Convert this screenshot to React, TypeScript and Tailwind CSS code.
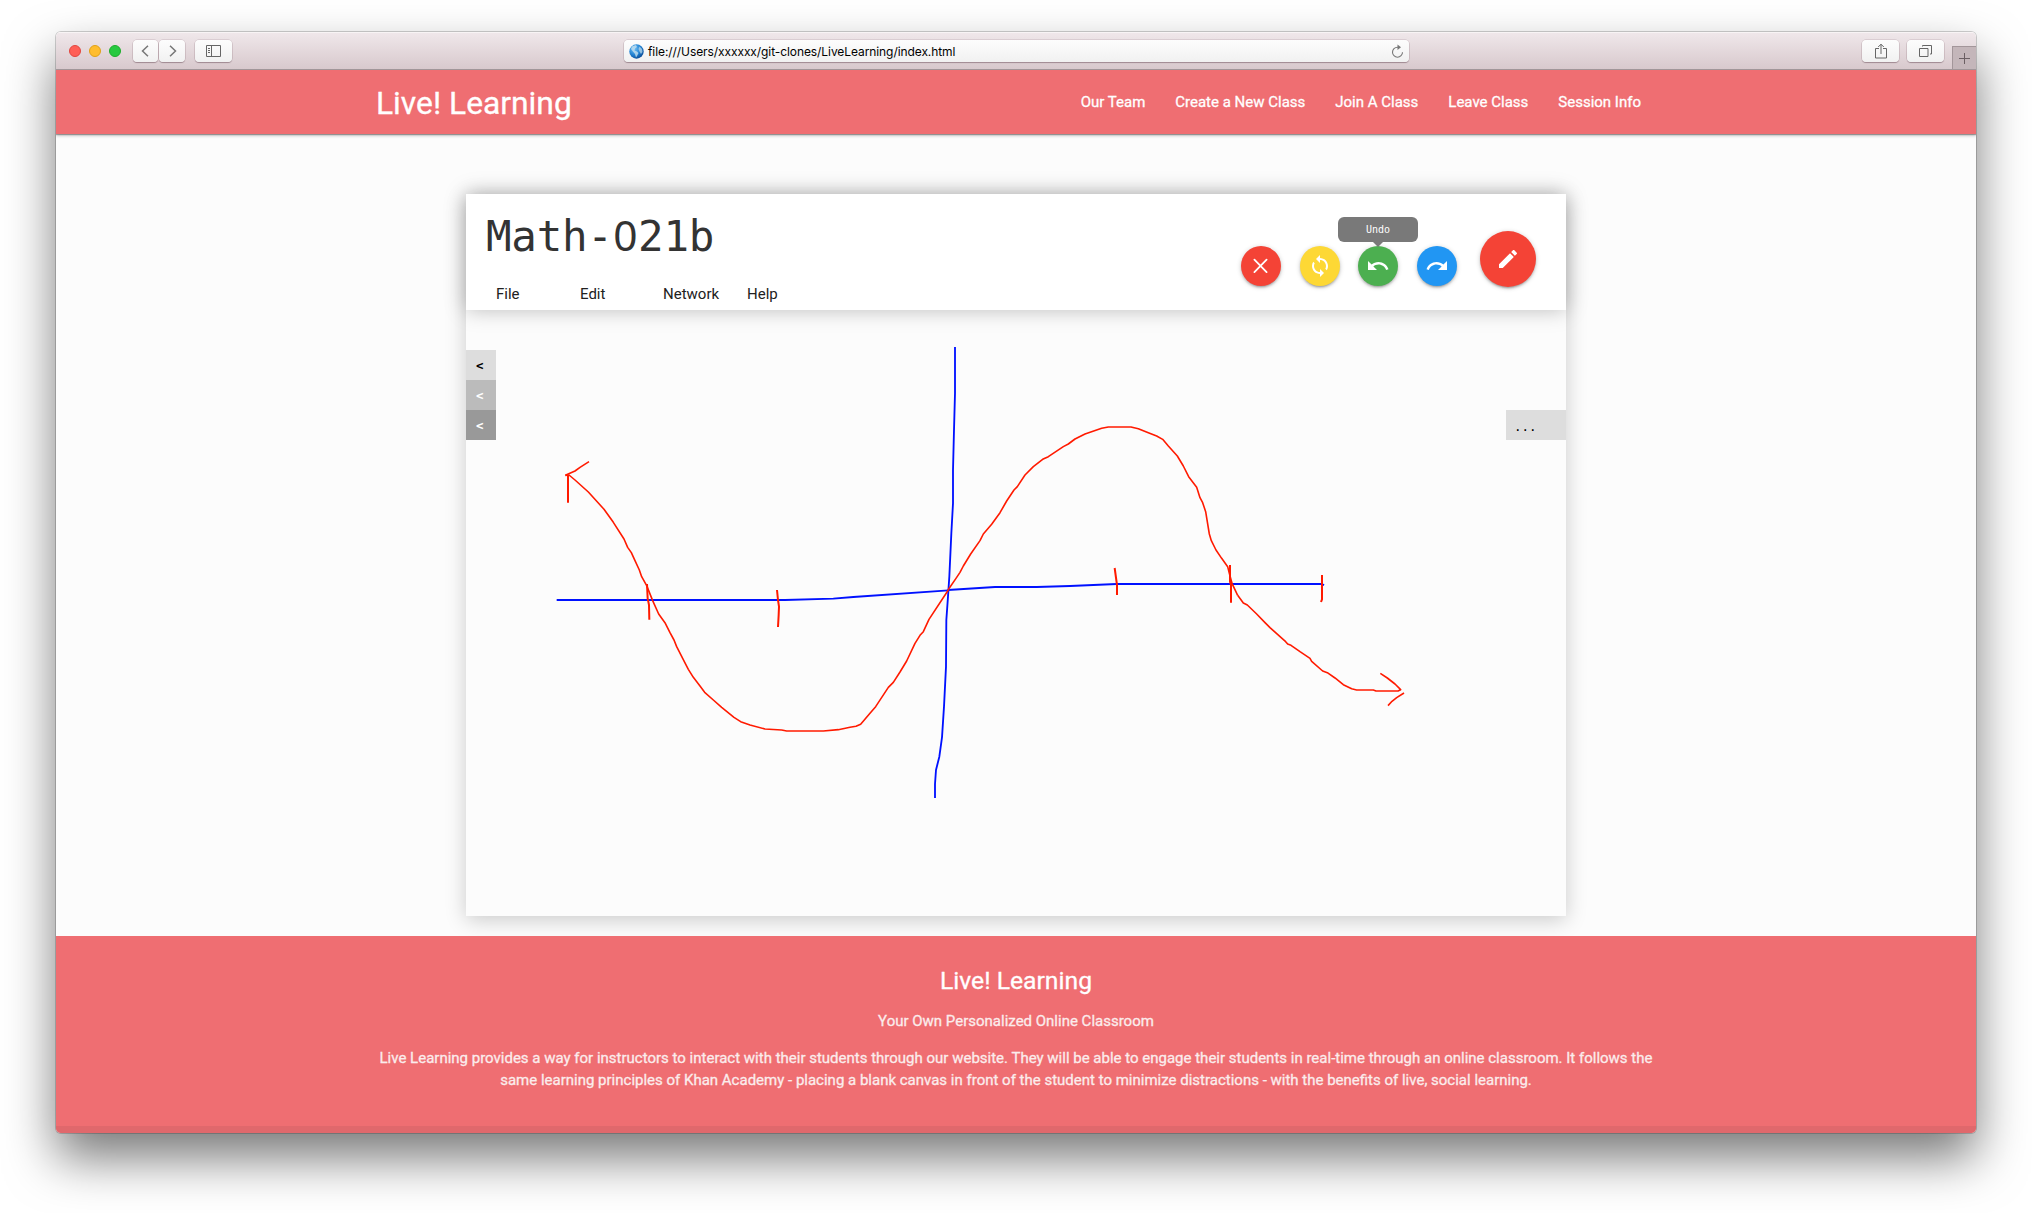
const MATERIAL = {
  sync: "M12 4V1L8 5l4 4V6c3.31 0 6 2.69 6 6 0 1.01-.25 1.97-.7 2.8l1.46 1.46C19.54 15.03 20 13.57 20 12c0-4.42-3.58-8-8-8zm0 14c-3.31 0-6-2.69-6-6 0-1.01.25-1.97.7-2.8L5.24 7.74C4.46 8.97 4 10.43 4 12c0 4.42 3.58 8 8 8v3l4-4-4-4v3z",
  undo: "M12.5 8c-2.65 0-5.05.99-6.9 2.6L2 7v9h9l-3.62-3.62c1.39-1.16 3.16-1.88 5.12-1.88 3.54 0 6.55 2.31 7.6 5.5l2.37-.78C21.08 11.03 17.15 8 12.5 8z",
  redo: "M18.4 10.6C16.55 8.99 14.15 8 11.5 8c-4.65 0-8.58 3.03-9.96 7.22L3.9 16c1.05-3.19 4.05-5.5 7.6-5.5 1.95 0 3.73.72 5.12 1.88L13 16h9V7l-3.6 3.6z",
  edit: "M3 17.25V21h3.75L17.81 9.94l-3.75-3.75L3 17.25zM20.71 7.04c.39-.39.39-1.02 0-1.41l-2.34-2.34c-.39-.39-1.02-.39-1.41 0l-1.83 1.83 3.75 3.75 1.83-1.83z",
};

const fab = "flex items-center justify-center rounded-full shadow-[0_2px_2px_0_rgba(0,0,0,0.14),0_3px_1px_-2px_rgba(0,0,0,0.12),0_1px_5px_0_rgba(0,0,0,0.2)]";
const chromeButton = "flex h-[22px] items-center justify-center rounded-[4px] bg-linear-to-b from-[#fdfdfd] to-[#f1f1f1] shadow-[0_0_0_0.5px_rgba(120,90,100,0.3),0_1px_1px_rgba(90,60,70,0.4)]";

function Glyph({ d }: { d: string }) {
  return (
    <svg className="size-6 fill-white" viewBox="0 0 24 24">
      <path d={d} />
    </svg>
  );
}

function TitleBar() {
  return (
    <div className="flex h-[38px] shrink-0 items-start border-b border-[#a3989b] bg-linear-to-b from-[#f0e8eb] to-[#d8c9cd] shadow-[inset_0_1px_0_#f8f4f5]">
      <div className="ml-[13px] mt-[13px] flex w-[64px] gap-2">
        <span className="size-3 rounded-full border border-[#e2463f] bg-[#ff5f57]" />
        <span className="size-3 rounded-full border border-[#e1a116] bg-[#ffbd2e]" />
        <span className="size-3 rounded-full border border-[#1dad2b] bg-[#28c940]" />
      </div>
      <div className="mt-2 flex gap-px">
        <div className={`${chromeButton} w-[25px]`}>
          <svg className="mr-px h-3 w-2 fill-none stroke-[#777] stroke-[1.5]" viewBox="0 0 8 12"><path d="M7 .7 1.5 6 7 11.3" /></svg>
        </div>
        <div className={`${chromeButton} w-[26px]`}>
          <svg className="ml-px h-3 w-2 fill-none stroke-[#777] stroke-[1.5]" viewBox="0 0 8 12"><path d="M1 .7 6.500 6 1 11.3" /></svg>
        </div>
      </div>
      <div className={`${chromeButton} ml-[10px] mt-2 w-[37px]`}>
        <svg className="h-3 w-[15px] fill-none stroke-[#666]" viewBox="0 0 15 12"><path d="M.5.5h14v11H.5zM5.500.5v11M2 3.500h2M2 5.500h2M2 7.500h2" /></svg>
      </div>
      <div className={`${chromeButton} ml-[392px] mt-2 w-[785px] justify-start`}>
        <svg className="ml-[5px] size-[15px]" viewBox="0 0 15 15">
          <defs>
            <radialGradient id="globe" cx="35%" cy="30%" r="75%">
              <stop offset="0" stopColor="#6fc0f7" />
              <stop offset="0.6" stopColor="#1f7fd0" />
              <stop offset="1" stopColor="#0b4a94" />
            </radialGradient>
          </defs>
          <circle cx="7.500" cy="7.500" r="7.200" fill="url(#globe)" />
          <path d="M3 2.500 7 1l1 2-2 1.500-.5 2L8 7.500l1.500 1.500L8 12l-1 1.500L6 10 3.500 7 2 5z" fill="#c6e0ee" opacity=".8" />
          <path d="M10.500 2.500 13 5l.5 3-1.500 2-1.500-2.500L9.500 5z" fill="#b8d8ea" opacity=".75" />
        </svg>
        <span className="ml-[4px] pt-px whitespace-nowrap font-['Inter'] text-[12px] leading-[22px] tracking-[-0.08px] text-black">file:///Users/xxxxxx/git-clones/LiveLearning/index.html</span>
        <svg className="ml-auto mr-[5px] h-[15px] w-[13px]" viewBox="0 0 13 15">
          <path d="M7.500 3.200H6.500A5 5 0 1 0 11.500 8.200" fill="none" stroke="#777" strokeWidth="1.100" />
          <path d="M6.500.5 10 3.200 6.500 5.900z" fill="#777" />
        </svg>
      </div>
      <div className={`${chromeButton} ml-[453px] mt-2 w-[37px]`}>
        <svg className="h-4 w-3 fill-none stroke-[#666]" viewBox="0 0 12 16"><path d="M4 5.500H.5v9.500h11V5.500H8M6 11V1.200M3.200 4 6 1.200 8.800 4" /></svg>
      </div>
      <div className={`${chromeButton} ml-2 mt-2 w-[37px]`}>
        <svg className="h-3 w-[13px] fill-none stroke-[#666]" viewBox="0 0 13 12"><path d="M.5 3.500h8.500v8H.5zM3.500 1.500V.5h9v8.500H11" /></svg>
      </div>
      <div className="ml-auto mt-[14px] flex h-[23px] w-6 items-center justify-center border-l border-t border-[#a3969a] bg-[#c4b6ba]">
        <svg className="size-[11px] stroke-[#6b5f63]" viewBox="0 0 11 11"><path d="M5.500 0v11M0 5.500h11" /></svg>
      </div>
    </div>
  );
}

const NAV = ["Our Team", "Create a New Class", "Join A Class", "Leave Class", "Session Info"];

function SiteHeader() {
  return (
    <header className="relative z-10 flex h-16 shrink-0 justify-center bg-[#ef6e72] text-white shadow-[0_1px_1px_0_rgba(0,0,0,0.3),0_2px_3px_0_rgba(0,0,0,0.2)] [-webkit-text-stroke:0.3px]">
      <div className="flex w-[1280px] items-center justify-between">
        <span className="pt-px text-[31.8px] leading-[64px]">Live! Learning</span>
        <nav className="flex text-[15px]">
          {NAV.map((label) => (
            <a key={label} className="px-[15px] leading-[64px]">{label}</a>
          ))}
        </nav>
      </div>
    </header>
  );
}

function Toolbar() {
  return (
    <div className="ml-auto mr-[30px] flex">
      <div className="mt-[52px] flex gap-[19px]">
        <button className={`${fab} size-10 bg-[#f44336]`}>
          <svg className="size-6 fill-none stroke-white stroke-[1.8]" viewBox="0 0 24 24" strokeLinecap="round"><path d="M5.400 5.700 17.600 18.100M17.600 5.700 5.400 18.100" /></svg>
        </button>
        <button className={`${fab} size-10 bg-[#fdd835]`}><Glyph d={MATERIAL.sync} /></button>
        <div className="relative -ml-px">
          <button className={`${fab} size-10 bg-[#4caf50]`}><Glyph d={MATERIAL.undo} /></button>
          <div className="absolute -top-[29px] -left-5 flex h-[25px] w-20 items-center justify-center rounded-[6px] bg-[#797979] font-['DejaVu_Sans_Mono'] text-[10px] text-white">
            Undo
            <span className="absolute left-[35px] top-[25px] border-x-[5px] border-t-[5px] border-x-transparent border-t-[#797979]" />
          </div>
        </div>
        <button className={`${fab} size-10 bg-[#2196f3]`}><Glyph d={MATERIAL.redo} /></button>
      </div>
      <button className={`${fab} ml-[23px] mt-[37px] size-14 bg-[#f44336]`}><Glyph d={MATERIAL.edit} /></button>
    </div>
  );
}

/* Freehand strokes, each group in its own local space at three units per pixel. */
function Drawing() {
  return (
    <svg className="absolute inset-0 h-[606px] w-[1100px] fill-none" viewBox="466 310 1100 606" strokeLinejoin="round">
      <g transform="translate(530 440) scale(0.33333)">
        <path stroke="#0011ff" strokeWidth="5.500" d="M80 480H765L910 476 970 471 1255 451" />
      </g>
      <g transform="translate(900 330) scale(0.33333)" stroke="#0011ff" strokeWidth="5.500">
        <path d="M144 780 285 771H410L510 768 650 762H1266L1272 766" />
        <path d="M165 51V190L162 300 159 420V520L154 610 148 740 144 800 139 870 138 1010 132 1130 126 1222 118 1280 108 1320 105 1362V1404" />
      </g>
      <g transform="translate(530 440) scale(0.33333)" stroke="#ff1a00">
        <path strokeWidth="4.800" d="M106 106 117 105 135 120 175 156 222 208 250 247 282 297 293 322 304 338 315 362 328 390 335 410 350 437 368 482 386 522 406 550 420 578 432 600 440 620 458 655 475 688 490 712 510 738 524 757 550 780 575 802 612 832 632 845 660 855 705 867 755 870 770 873 880 873 925 869 960 862 978 859 992 853 1020 820 1037 800 1075 742 1090 727 1110 696 1130 663 1155 610 1170 586 1180 575 1197 538 1255 450" />
        <path strokeWidth="4.800" d="M106 106 135 93 150 82 177 65" />
        <path strokeWidth="6" d="M114 105V188M351 432 353 475 357 495 358 539M741 450 744 480 747 500 746 525 744 561" />
      </g>
      <g transform="translate(900 330) scale(0.33333)" stroke="#ff1a00">
        <path strokeWidth="4.800" d="M144 780 168 745 180 727 190 708 212 672 240 632 250 612 275 583 300 548 320 513 342 480 352 470 375 435 400 410 428 388 445 380 490 350 505 342 525 327 555 312 605 295 625 291 693 291 715 296 745 308 770 318 788 328 805 348 832 378 850 408 866 440 890 472 900 503 908 518 917 545 928 612 934 632 948 660 965 685 983 710 988 730 996 760 1013 796" />
        <path strokeWidth="6" d="M644 714 651 765V795" />
      </g>
      <g transform="translate(1200 400) scale(0.33333)" stroke="#ff1a00">
        <path strokeWidth="4.800" d="M113 586 130 609 142 615 170 642 195 668 210 683 257 725 263 732 273 736 300 755 330 775 335 784 368 813 382 818 405 834 430 854 455 866 470 870 520 870 528 873 594 873 602 869 585 852 562 834 541 820M612 879 590 893 576 904 564 917" />
        <path strokeWidth="6" d="M90 495V545L93 555V608M366 525V598L363 606" />
      </g>
    </svg>
  );
}

function Board() {
  return (
    <section className="relative mx-auto mt-[60px] h-[722px] w-[1100px] bg-[#fcfcfc] shadow-[0_4px_20px_0_rgba(0,0,0,0.2)]">
      <div className="relative flex h-[116px] bg-white shadow-[0_0_20px_0_rgba(0,0,0,0.26)]">
        <div className="flex flex-col">
          <h1 className="ml-[20px] mt-[15px] h-14 font-['DejaVu_Sans_Mono'] text-[42.5px] leading-[56px] tracking-[-0.25px] text-[#333]">
            Math-<span className="inline-block w-[25.4px] text-center font-['Noto_Sans'] leading-[40px]">0</span>21b
          </h1>
          <div className="mt-[17px] ml-[30px] grid grid-cols-[84px_83px_84px_60px] text-[15px] leading-[24px] text-[#212121]">
            <span>File</span>
            <span>Edit</span>
            <span>Network</span>
            <span>Help</span>
          </div>
        </div>
        <Toolbar />
      </div>
      <div className="relative h-[606px]">
        <Drawing />
        <div className="relative flex items-end justify-between pt-10 font-['DejaVu_Sans_Mono'] text-[12.5px]">
          <div className="w-[30px] font-bold leading-[30px]">
            <div className="h-[30px] bg-[#ddd] pl-[10px] pt-px text-black">&lt;</div>
            <div className="h-[30px] bg-[#bbb] pl-[10px] pt-px text-white">&lt;</div>
            <div className="h-[30px] bg-[#999] pl-[10px] pt-px text-white">&lt;</div>
          </div>
          <div className="h-[30px] w-[60px] bg-[#ddd] pl-2 pt-0.5 leading-[30px] text-black">...</div>
        </div>
      </div>
    </section>
  );
}

function SiteFooter() {
  return (
    <footer className="relative z-10 mt-5 flex flex-1 flex-col items-center bg-[#ef6e72] text-center text-[15px] leading-[22.5px] text-[#fbecec] [-webkit-text-stroke:0.3px]">
      <h5 className="mt-[31px] text-[24.7px] leading-[28px] text-white">Live! Learning</h5>
      <p className="mt-[15px]">Your Own Personalized Online Classroom</p>
      <p className="mt-[14px] whitespace-nowrap">
        Live Learning provides a way for instructors to interact with their students through our website. They will be able to engage their students in real-time through an online classroom. It follows the
        <br />
        same learning principles of Khan Academy - placing a blank canvas in front of the student to minimize distractions - with the benefits of live, social learning.
      </p>
      <div className="mt-auto h-[7px] w-full bg-[#e0686c]" />
    </footer>
  );
}

export default function App() {
  return (
    <main className="h-[1213px] w-[2032px] overflow-hidden bg-white pt-8 font-['Roboto'] antialiased">
      <div className="mx-auto h-[1101px] w-[1920px] rounded-[5px] shadow-[0_0_0_1px_rgba(0,0,0,0.18),0_25px_50px_0_rgba(0,0,0,0.53)]">
        <div className="flex h-full flex-col overflow-hidden rounded-[5px] bg-[#fcfcfc]">
          <TitleBar />
          <SiteHeader />
          <Board />
          <SiteFooter />
        </div>
      </div>
    </main>
  );
}
